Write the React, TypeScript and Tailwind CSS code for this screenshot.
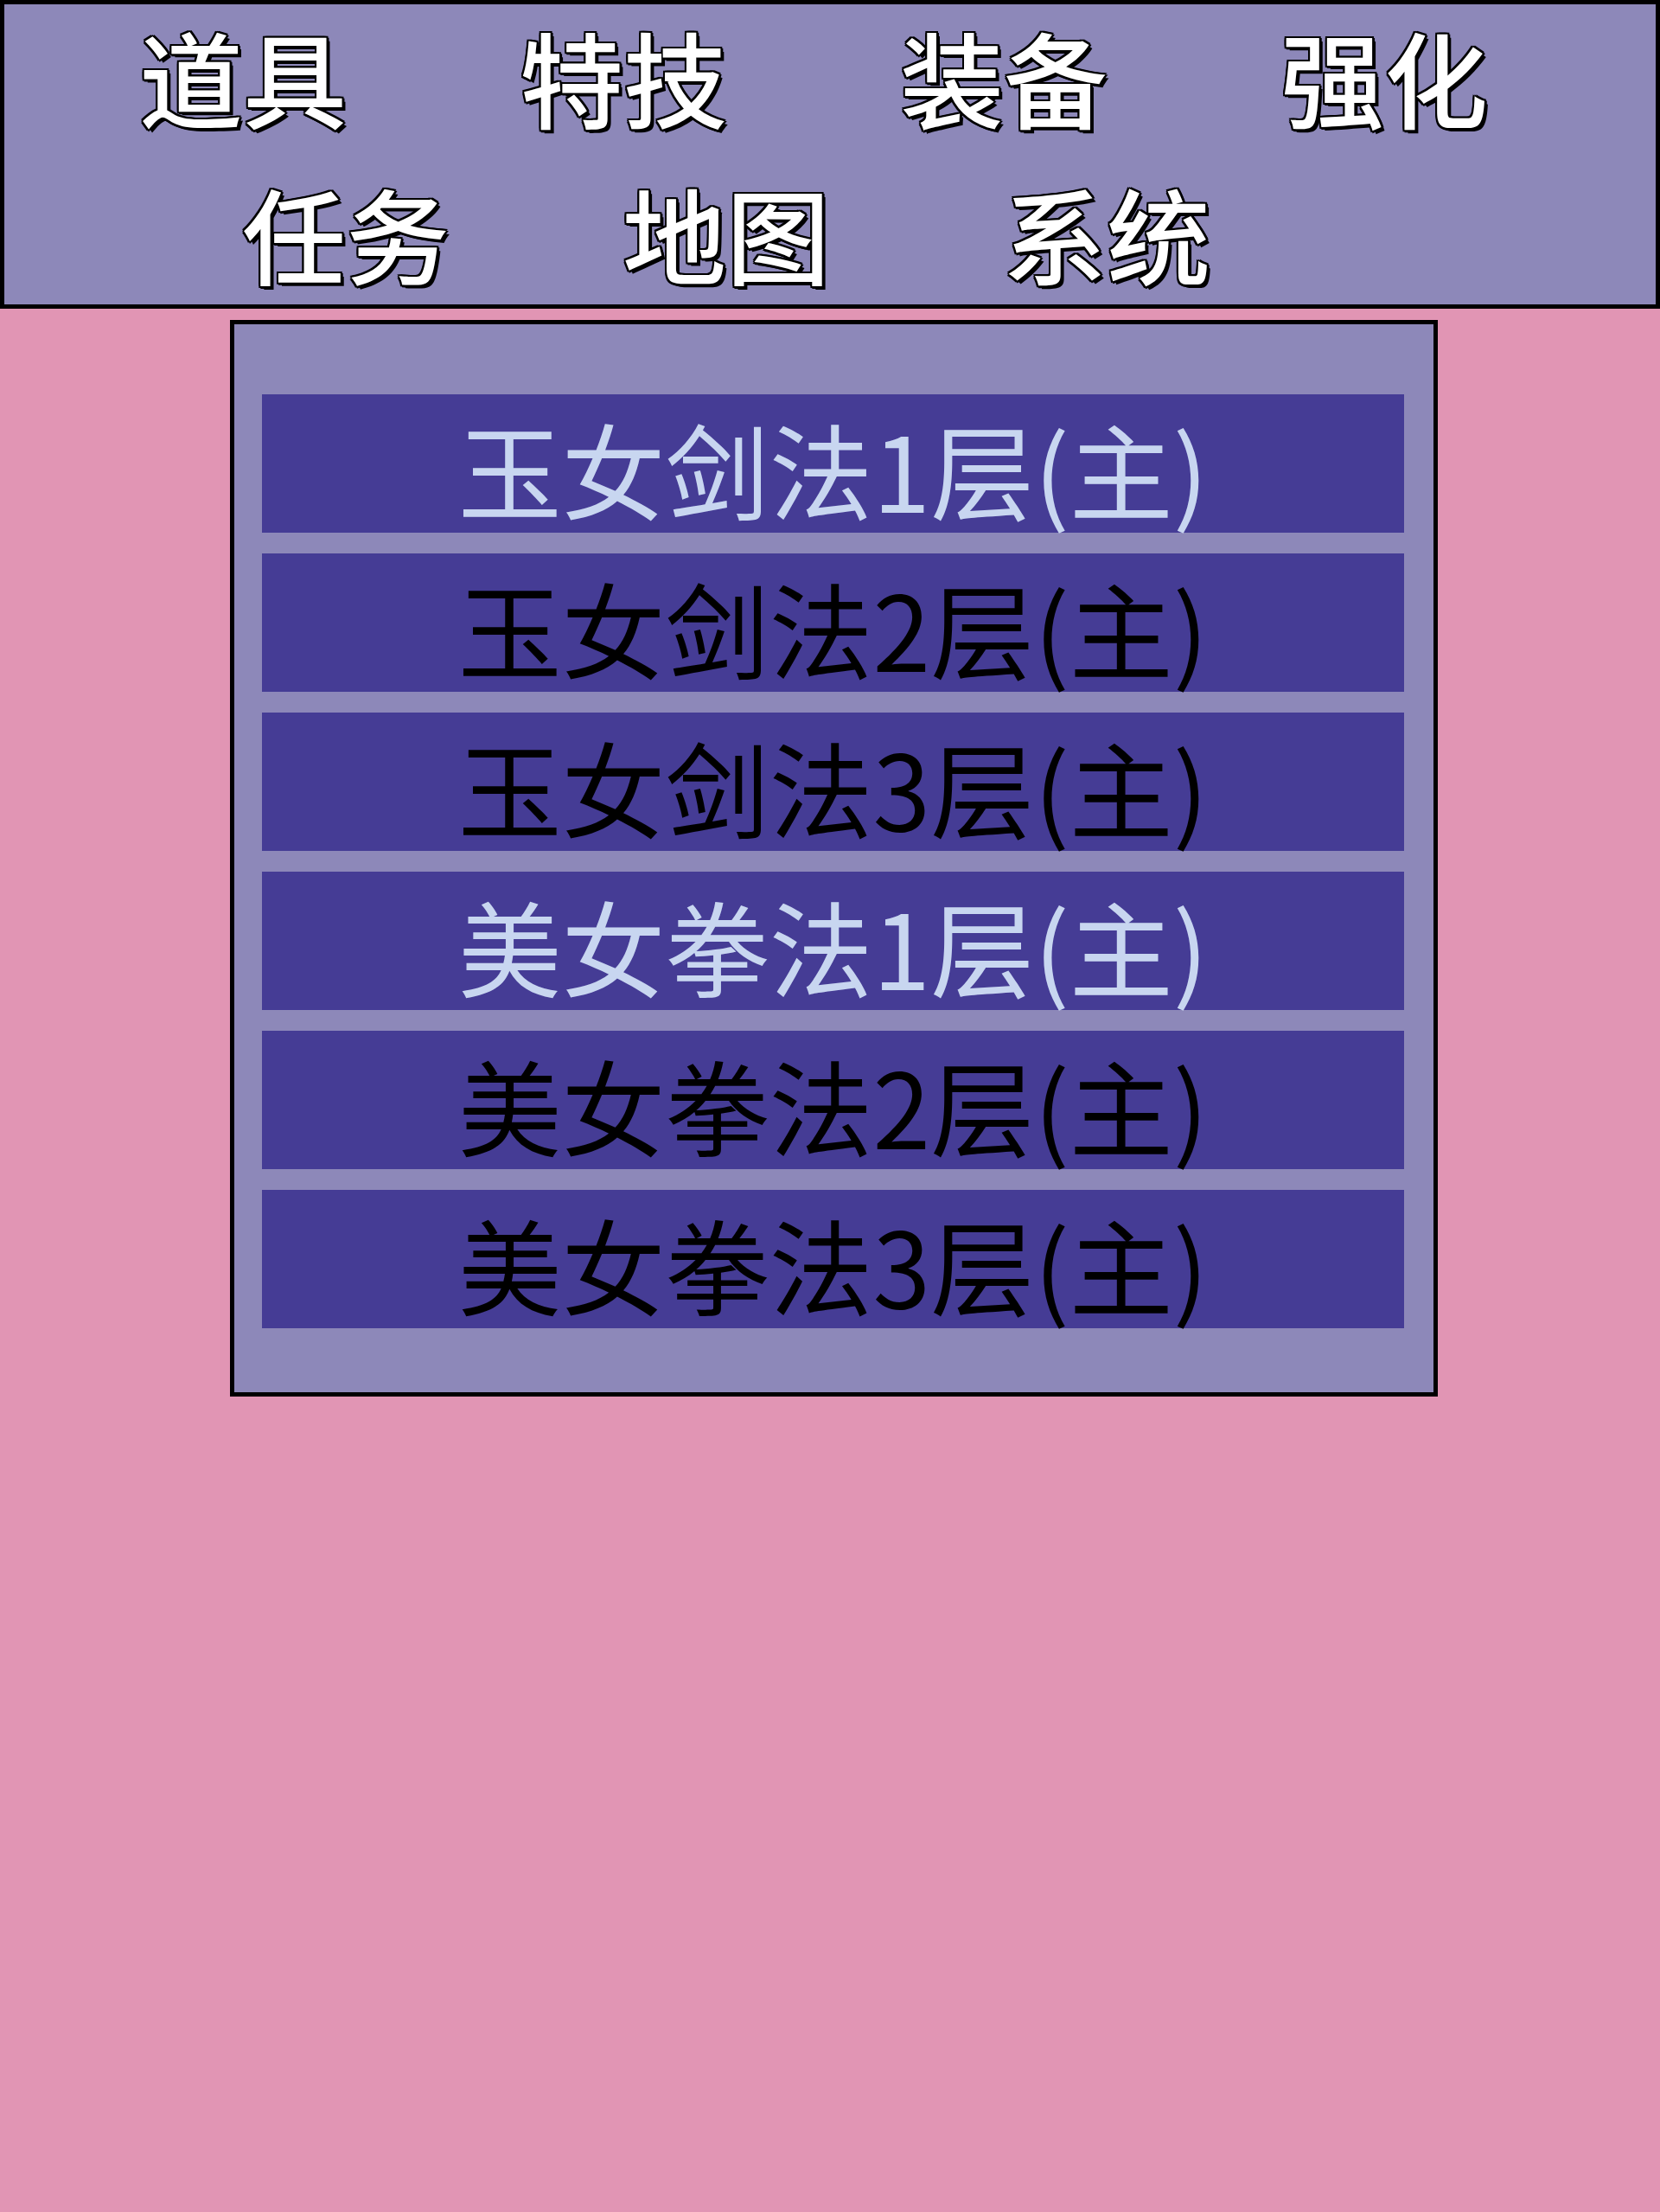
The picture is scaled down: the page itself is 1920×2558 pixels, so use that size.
const menuTop = ['道具', '特技', '装备', '强化']
const menuBottom = ['任务', '地图', '系统']

const skills = [
	{ name: '玉女剑法1层(主)', active: true },
	{ name: '玉女剑法2层(主)', active: false },
	{ name: '玉女剑法3层(主)', active: false },
	{ name: '美女拳法1层(主)', active: true },
	{ name: '美女拳法2层(主)', active: false },
	{ name: '美女拳法3层(主)', active: false },
]

function MenuItem({ label }: { label: string }) {
	return (
		<div className="w-[440px] text-center text-[120px] leading-[1.45] font-medium text-white [text-shadow:4px_4px_0_#000,-2px_-2px_0_#000,2px_-2px_0_#000,-2px_2px_0_#000,3px_0_0_#000,-2px_0_0_#000,0_3px_0_#000,0_-2px_0_#000]">
			{label}
		</div>
	)
}

export default function App() {
	return (
		<div className="min-h-[2558px] w-full bg-[#e195b4] font-['Noto_Sans_CJK_SC','Noto_Sans',sans-serif]">
			<div className="h-[357px] w-full border-[5px] border-black bg-[#8d88b9]">
				<div className="-mt-[4px] flex pl-[56px]">
					{menuTop.map(label => (
						<MenuItem key={label} label={label} />
					))}
				</div>
				<div className="mt-[7px] flex pl-[175px]">
					{menuBottom.map(label => (
						<MenuItem key={label} label={label} />
					))}
				</div>
			</div>

			<div className="ml-[266px] mt-[13px] w-[1397px] border-[5px] border-black bg-[#8d88b9] pt-[81px] pb-[74px] pl-[32px] pr-[34px]">
				<div className="flex flex-col gap-[24px]">
					{skills.map(skill => (
						<div
							key={skill.name}
							className={`flex h-[160px] items-center justify-center bg-[#453c95] pt-[10px] text-[120px] leading-none ${
								skill.active ? 'text-[#c8d6f0]' : 'text-black'
							}`}>
							{skill.name}
						</div>
					))}
				</div>
			</div>
		</div>
	)
}
